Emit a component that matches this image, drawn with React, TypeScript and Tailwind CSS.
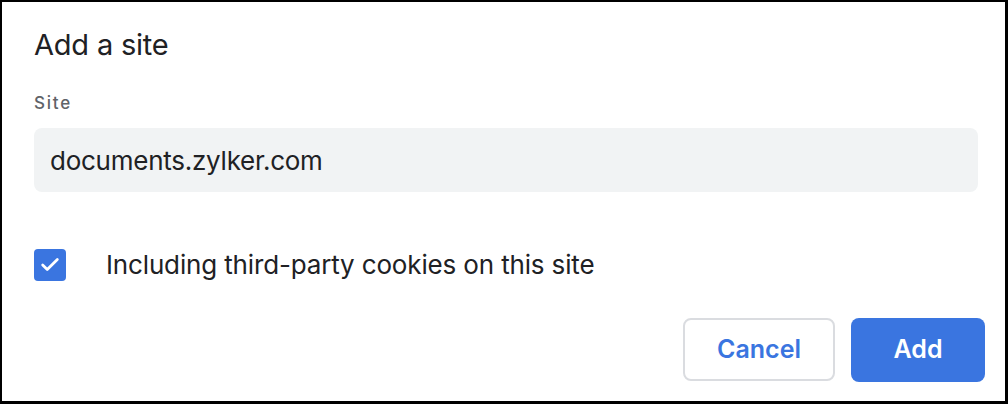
import { Check } from 'lucide-react';

export default function App() {
    return (
        <div className="h-[404px] w-[1008px] border-t-2 border-l-2 border-r-[3px] border-b-[3px] border-black bg-white font-['Inter',sans-serif] text-[#202124]">
            <div className="flex flex-col pl-[32px] pt-[25px]">
                <h1 className="text-[29px] leading-[36px] font-normal tracking-[-0.2px]">Add a site</h1>

                <label className="mt-[30px] text-[17px] leading-[20px] font-medium tracking-[1.8px] text-[#5f6368]">
                    Site
                </label>
                <div className="mt-[15px] flex h-[64px] w-[944px] items-center rounded-[8px] bg-[#f1f3f4] px-[16px]">
                    <span className="text-[26px] tracking-[-0.25px]">documents.zylker.com</span>
                </div>

                <div className="mt-[53px] flex items-center">
                    <span className="flex h-[32px] w-[32px] items-center justify-center rounded-[4px] bg-[#3a75e0]">
                        <Check className="h-[22px] w-[22px] text-white" strokeWidth={3} />
                    </span>
                    <span className="ml-[40px] text-[26px] tracking-[-0.15px]">
                        Including third-party cookies on this site
                    </span>
                </div>

                <div className="mt-[34px] flex justify-end gap-[16px] pr-[20px]">
                    <button className="h-[63px] w-[152px] rounded-[8px] border-2 border-[#dadce0] bg-white text-[25px] font-semibold text-[#3a75e0]">
                        Cancel
                    </button>
                    <button className="h-[64px] w-[134px] rounded-[8px] bg-[#3a75e0] text-[25px] font-semibold text-white">
                        Add
                    </button>
                </div>
            </div>
        </div>
    );
}
